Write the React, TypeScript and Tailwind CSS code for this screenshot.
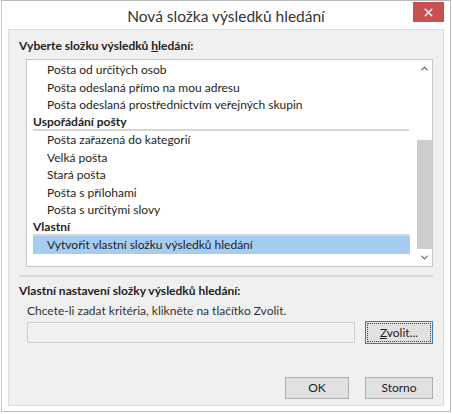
import { ChevronUp, ChevronDown, X } from 'lucide-react'

const GROUPS = [
  {
    title: null,
    items: ['Pošta od určitých osob', 'Pošta odeslaná přímo na mou adresu', 'Pošta odeslaná prostřednictvím veřejných skupin'],
  },
  {
    title: 'Uspořádání pošty',
    items: ['Pošta zařazená do kategorií', 'Velká pošta', 'Stará pošta', 'Pošta s přílohami', 'Pošta s určitými slovy'],
  },
  {
    title: 'Vlastní',
    items: ['Vytvořit vlastní složku výsledků hledání'],
  },
]

const SELECTED = 'Vytvořit vlastní složku výsledků hledání'

export default function App() {
  return (
    <div
      className="h-[414px] w-[452px] overflow-hidden bg-white text-[12px] text-[#1e1e1e]"
      style={{ fontFamily: 'Lato, "Noto Sans", sans-serif' }}
    >
      <div className="ml-[1px] flex h-[412px] w-[450px] flex-col border border-[#b9b9b9] border-l-[#c8c8c8] bg-white">
        {/* title bar */}
        <div className="relative flex h-[28px] shrink-0 items-center justify-center pt-[4px]">
          <span className="text-[15.5px] text-[#333]">Nová složka výsledků hledání</span>
          <div className="absolute right-[6px] top-[1px] flex h-[20px] w-[31px] items-center justify-center bg-[#c75050]">
            <X size={13} strokeWidth={2.6} color="#fff" />
          </div>
        </div>

        {/* body */}
        <div className="mx-[6px] mb-[5px] flex flex-1 flex-col border border-[#dcdcdc] bg-[#f0f0f0] px-[10px]">
          <div className="mt-[8px] text-[12px] font-bold leading-[16px]">
            Vyberte složku výsledků <span className="underline">h</span>ledání:
          </div>

          <div className="ml-[7px] mt-[5px] flex h-[208px] border border-[#c6c6c6] bg-white">
            <div className="flex-1 px-[6px] pt-[1px]">
              {GROUPS.map((g) => (
                <div key={g.title ?? 'none'}>
                  {g.title && (
                    <div className="mr-[1px] h-[17.5px] border-b-2 border-[#d6d6d6] text-[12px] font-bold leading-[15.5px]">
                      {g.title}
                    </div>
                  )}
                  {g.items.map((it) => (
                    <div
                      key={it}
                      className={`h-[17.5px] pl-[14px] text-[12px] leading-[17.5px] ${
                        it === SELECTED ? 'bg-[#a6cdf0]' : ''
                      }`}
                    >
                      {it}
                    </div>
                  ))}
                </div>
              ))}
            </div>
            <div className="flex w-[16px] flex-col items-center bg-white">
              <div className="flex h-[17px] items-center justify-center">
                <ChevronUp size={11} strokeWidth={2.4} color="#606060" />
              </div>
              <div className="mt-[63px] w-[15px] flex-1 bg-[#cdcdcd]" />
              <div className="flex h-[17px] items-center justify-center">
                <ChevronDown size={11} strokeWidth={2.4} color="#606060" />
              </div>
            </div>
          </div>

          <div className="mt-[8px] h-[2px] bg-[#dadada]" />

          <div className="mt-[6px] text-[12px] font-bold leading-[16px]">Vlastní nastavení složky výsledků hledání:</div>
          <div className="mt-[4px] pl-[8px] text-[12px] leading-[16px] text-[#333]">
            Chcete-li zadat kritéria, klikněte na tlačítko Zvolit.
          </div>
          <div className="mt-[2px] flex items-center gap-[10px] pl-[8px]">
            <div className="h-[21px] flex-1 border border-[#cfcfcf] bg-[#f0f0f0]" />
            <div className="flex h-[23px] w-[68px] items-center justify-center border border-[#3c7fb1] bg-[#e1e1e1] p-[1px]">
              <div className="flex h-full w-full items-center justify-center border border-dotted border-[#444] text-[12px]">
                <span>
                  <span className="underline">Z</span>volit...
                </span>
              </div>
            </div>
          </div>

          <div className="mt-[33px] flex justify-end gap-[16px]">
            <div className="flex h-[22px] w-[64px] items-center justify-center border border-[#adadad] bg-[#e1e1e1] text-[12px]">
              OK
            </div>
            <div className="flex h-[22px] w-[68px] items-center justify-center border border-[#adadad] bg-[#e1e1e1] text-[12px]">
              Storno
            </div>
          </div>
        </div>
      </div>
    </div>
  )
}
